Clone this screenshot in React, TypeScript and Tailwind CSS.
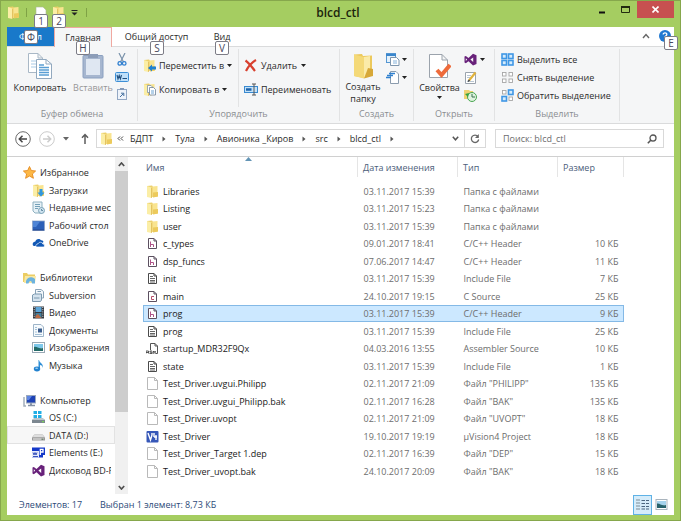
import React from 'react';

type IconName =
  | 'folder' | 'h' | 'c' | 'text' | 'asm' | 'blank' | 'uv'
  | 'star' | 'downloads' | 'recent' | 'desktop' | 'onedrive'
  | 'libraries' | 'svn' | 'video' | 'docs' | 'pictures' | 'music'
  | 'computer' | 'os' | 'drive' | 'elements' | 'vs';

interface FileRow {
  icon: IconName;
  name: string;
  date: string;
  type: string;
  size?: string;
  selected?: boolean;
}

const files: FileRow[] = [
  { icon: 'folder', name: 'Libraries', date: '03.11.2017 15:39', type: 'Папка с файлами' },
  { icon: 'folder', name: 'Listing', date: '03.11.2017 15:23', type: 'Папка с файлами' },
  { icon: 'folder', name: 'user', date: '03.11.2017 15:39', type: 'Папка с файлами' },
  { icon: 'h', name: 'c_types', date: '09.01.2017 18:41', type: 'C/C++ Header', size: '10 КБ' },
  { icon: 'h', name: 'dsp_funcs', date: '07.06.2017 14:47', type: 'C/C++ Header', size: '11 КБ' },
  { icon: 'text', name: 'init', date: '03.11.2017 15:39', type: 'Include File', size: '7 КБ' },
  { icon: 'c', name: 'main', date: '24.10.2017 19:15', type: 'C Source', size: '25 КБ' },
  { icon: 'h', name: 'prog', date: '03.11.2017 15:39', type: 'C/C++ Header', size: '9 КБ', selected: true },
  { icon: 'text', name: 'prog', date: '03.11.2017 15:39', type: 'Include File', size: '25 КБ' },
  { icon: 'asm', name: 'startup_MDR32F9Qx', date: '04.03.2016 13:55', type: 'Assembler Source', size: '10 КБ' },
  { icon: 'text', name: 'state', date: '03.11.2017 15:39', type: 'Include File', size: '1 КБ' },
  { icon: 'blank', name: 'Test_Driver.uvgui.Philipp', date: '02.11.2017 21:09', type: 'Файл "PHILIPP"', size: '135 КБ' },
  { icon: 'blank', name: 'Test_Driver.uvgui_Philipp.bak', date: '02.11.2017 16:28', type: 'Файл "BAK"', size: '135 КБ' },
  { icon: 'blank', name: 'Test_Driver.uvopt', date: '02.11.2017 21:09', type: 'Файл "UVOPT"', size: '18 КБ' },
  { icon: 'uv', name: 'Test_Driver', date: '19.10.2017 19:19', type: 'µVision4 Project', size: '18 КБ' },
  { icon: 'blank', name: 'Test_Driver_Target 1.dep', date: '02.11.2017 16:39', type: 'Файл "DEP"', size: '15 КБ' },
  { icon: 'blank', name: 'Test_Driver_uvopt.bak', date: '24.10.2017 20:09', type: 'Файл "BAK"', size: '18 КБ' },
];

interface NavItem {
  icon: IconName;
  label: string;
  root?: boolean;
  active?: boolean;
}

// null is an empty line between the sections
const navItems: (NavItem | null)[] = [
  { icon: 'star', label: 'Избранное', root: true },
  { icon: 'downloads', label: 'Загрузки' },
  { icon: 'recent', label: 'Недавние места' },
  { icon: 'desktop', label: 'Рабочий стол' },
  { icon: 'onedrive', label: 'OneDrive' },
  null,
  { icon: 'libraries', label: 'Библиотеки', root: true },
  { icon: 'svn', label: 'Subversion' },
  { icon: 'video', label: 'Видео' },
  { icon: 'docs', label: 'Документы' },
  { icon: 'pictures', label: 'Изображения' },
  { icon: 'music', label: 'Музыка' },
  null,
  { icon: 'computer', label: 'Компьютер', root: true },
  { icon: 'os', label: 'OS (C:)' },
  { icon: 'drive', label: 'DATA (D:)', active: true },
  { icon: 'elements', label: 'Elements (E:)' },
  { icon: 'vs', label: 'Дисковод BD-ROM' },
];

const crumbs = ['БДПТ', 'Тула', 'Авионика _Киров', 'src', 'blcd_ctl'];

const FolderShape = () => (
  <>
    <path d="M1 1 L6 .5 L7 1.5 V12 H1 Z" fill="#ecd06c" />
    <path d="M6.5 1.5 L11.5 1 V12 H6.5 Z" fill="#f9e48f" />
    <path d="M1 1 L5.500 2.500 V13 L1 12 Z" fill="#fbeea6" />
    <path d="M5.500 3 V13" stroke="#dcb850" strokeWidth=".7" />
    <path d="M7 7.500 L12 7 V11.500 L7 12.500 Z" fill="#ecca5c" />
  </>
);

const PageShape = ({ stroke = '#5c5060' }: { stroke?: string }) => (
  <path d="M2.500 1.500 H8 L10.500 4 V11.500 H2.500 Z M8 1.500 V4 H10.500" fill="#fff" stroke={stroke} />
);

const shapes: Record<IconName, React.ReactNode> = {
  folder: <FolderShape />,
  h: <><PageShape /><path d="M4.500 4.500 V10 M4.500 7.500 H7.500 V10" fill="none" stroke="#b0568a" /></>,
  c: <><PageShape /><path d="M8 6.500 H5.500 V9.500 H8" fill="none" stroke="#b8506c" /></>,
  text: <><PageShape stroke="#4a4a4a" /><path d="M4 4.500 H7 M4 6.500 H9 M4 8.500 H9 M4 10 H9" stroke="#666" /></>,
  asm: (
    <>
      <path d="M4.500 8 V1.500 H9 L11.500 4 V11.500 H10 M9 1.500 V4 H11.500" fill="#fff" stroke="#555" />
      <path d="M0 11.500 V9 H2.500 V11.500 M0 10.500 H2.500 M6 9 H4 V10.200 H6 V11.500 H3.500 M7.200 12 V9 L8.200 10.500 L9.200 9 V12" fill="none" stroke="#333" strokeWidth=".8" />
    </>
  ),
  blank: <path d="M1.500 .5 H8.500 L11.500 3.500 V12.500 H1.500 Z M8.500 .5 V3.500 H11.500" fill="#fff" stroke="#b9b9b9" />,
  uv: (
    <>
      <rect x=".5" y="1" width="12" height="11.500" rx="1" fill="#3657b8" />
      <path d="M2 3 L4.500 10 L6 5 V3 M8 3 V7 M8 7 H11 M10 5 V10" fill="none" stroke="#fff" strokeWidth="1.400" />
    </>
  ),
  star: <path d="M6.500 .5 L8.300 4.500 L12.600 5 L9.400 8 L10.400 12.300 L6.500 10 L2.600 12.300 L3.600 8 L.4 5 L4.700 4.500 Z" fill="#fdb845" stroke="#e58a1f" strokeWidth=".9" />,
  downloads: <><FolderShape /><path d="M7.500 5 H10.500 V8.500 H12.500 L9 12.800 L5.500 8.500 H7.500 Z" fill="#2f97dd" /></>,
  recent: (
    <>
      <path d="M1 1 H10 V12 H3 L1 10 Z" fill="#e6f1f6" stroke="#8eb0c0" />
      <path d="M3 3.500 H8 M3 5.500 H8 M3 7.500 H6" stroke="#74a0b8" />
      <circle cx="9.500" cy="9.500" r="3" fill="#cfe3ef" stroke="#7ba2b6" />
      <path d="M9.500 8 V9.500 H11" stroke="#47758d" fill="none" strokeWidth=".8" />
    </>
  ),
  desktop: <><rect x=".5" y="2" width="12" height="9.500" fill="#2c60b8" stroke="#8da5c9" strokeWidth=".8" /><path d="M1 2.500 H8 L4 8 H1 Z" fill="#4d84d6" /><path d="M1 11 H12" stroke="#24458a" /></>,
  onedrive: (
    <>
      <path d="M1 9.500 C0 6.800 2 5.600 3.200 5.800 C3.700 2.600 7.600 2 9 4.200 C10.500 4 11.400 5 11.500 6 L6 10 H2 Z" fill="#1158b5" />
      <path d="M4.500 11 C3 9.600 4.400 7.800 6 8 C6.600 5.700 10 5.700 10.600 7.800 C12.800 7.700 13 10.400 11.600 11 Z" fill="#1158b5" stroke="#fff" strokeWidth=".7" />
    </>
  ),
  libraries: (
    <>
      <path d="M0 2 H4 L5 3.500 H12 V11 H0 Z" fill="#eccd63" />
      <path d="M2 5 H13 L12 12 H1 Z" fill="#f9e8a2" />
      <path d="M3 10 C4 6 9 5 12 8 V12.500 H9 C9 9.500 6.500 9 5.500 12.500 H3 Z" fill="#6db3de" />
    </>
  ),
  svn: (
    <>
      <path d="M3.500 .5 H9 L11.500 2.500 V9 H3.500 Z" fill="#f4f8fb" stroke="#8ba4b8" />
      <path d="M.5 6 L2.500 5 H9.500 V11 L8.500 12.500 H.5 Z" fill="#d5e3ee" stroke="#7d9ab0" />
      <path d="M2 9 H7.500 M5.500 2.500 H9" stroke="#7d9ab0" />
    </>
  ),
  video: (
    <>
      <rect x="1" y=".5" width="11" height="12" fill="#34383e" />
      <path d="M3.500 1 H9.500 V6 H3.500 Z" fill="#5ca5d8" />
      <path d="M3.500 7 H9.500 V12 H3.500 Z" fill="#427e9b" />
      <path d="M3.500 10 L6 8 L9.500 12 H3.500 Z" fill="#bd6a42" />
      <path d="M2.200 1 V12 M10.800 1 V12" stroke="#d9dde0" strokeDasharray="1 1.200" />
    </>
  ),
  docs: (
    <>
      <path d="M1.500 .5 H9 L11.500 3 V12.500 H1.500 Z" fill="#f6fafd" stroke="#9db4c8" />
      <path d="M3 3.500 H5 M3 5.500 H5 M3 8 H5 M3 10.500 H10" stroke="#a4c0d6" />
      <rect x="6" y="4.500" width="4" height="4" fill="#3b5c8c" />
    </>
  ),
  pictures: (
    <>
      <rect x=".5" y="1.500" width="12" height="10" fill="#fff" stroke="#9aa9b5" />
      <path d="M2 3 H11 V7 H2 Z" fill="#7ec8ea" />
      <path d="M2 6 C5 5 6 8 11 7 V10 H2 Z" fill="#236a67" />
    </>
  ),
  music: (
    <>
      <path d="M7 1 C7.500 4 12 4.500 10.500 9 C10.500 6.600 9 6 8 6 V10 H6.500 V1 Z" fill="#2f8fd6" />
      <ellipse cx="5" cy="10" rx="3.200" ry="2.400" fill="#2382cf" />
      <ellipse cx="4.600" cy="9.300" rx="1.500" ry=".8" fill="#9dd0f3" />
    </>
  ),
  computer: (
    <>
      <rect x="3.500" y="1.500" width="9" height="7.500" fill="#1e42b5" stroke="#9aa8bd" />
      <path d="M4 2 H9 L6 6 H4 Z" fill="#5e86e3" />
      <path d="M5 11.500 H12 M7 10 H9" stroke="#8492a6" strokeWidth="1.400" />
      <path d="M1 3 V12 H3" stroke="#a3aebb" fill="none" strokeWidth="1.500" />
    </>
  ),
  os: (
    <>
      <path d="M1.500 0 H5 V3 H1.500 Z M6 0 H9.500 V3 H6 Z M1.500 4 H5 V7 H1.500 Z M6 4 H9.500 V7 H6 Z" fill="#20aee5" />
      <path d="M0 9 L2 7.500 H11 L13 9 V12 H0 Z" fill="#7c8790" />
      <path d="M2 7.500 H11 L13 9 H0 Z" fill="#bcc6cd" />
      <path d="M10 10.700 H12" stroke="#79e04e" />
    </>
  ),
  drive: (
    <>
      <path d="M2.500 5.500 H10.500 L13 8.500 V11.500 H0 V8.500 Z" fill="#9a9a9a" />
      <path d="M2.500 5.500 H10.500 L12.500 8.300 H.5 Z" fill="#dedede" />
      <path d="M1 9.200 H12 V10.800 H1 Z" fill="#ccc" />
      <path d="M9.500 10.200 H11.500" stroke="#4f6b4f" />
    </>
  ),
  elements: (
    <>
      <path d="M0 1.500 H13 V9 H11 V11.500 H0 Z" fill="#1438c9" />
      <path d="M0 5 H7 V11.500 H0 Z" fill="#e6eafa" />
      <path d="M1 6.500 L2 9 L3 6.500 L4 9 L5 6.500 M1 10.500 H6" fill="none" stroke="#2643b5" strokeWidth=".9" />
      <path d="M8.300 9 V3.300 H11 V6 H8.300" fill="none" stroke="#fff" strokeWidth="1.300" />
    </>
  ),
  vs: <path d="M9 .8 L12.500 2.200 V11 L9 12.400 L4.500 8.200 L1.800 10.300 L.5 9.600 V3.600 L1.800 3 L4.500 5 Z M9.200 4.400 L6.400 6.600 L9.200 8.900 Z M1.800 5.200 V8 L3.200 6.600 Z" fill="#68217a" fillRule="evenodd" />,
};

const Icon = ({ name }: { name: IconName }) => (
  <svg viewBox="0 0 13 13" className="size-[13px] shrink-0" aria-hidden="true">
    {shapes[name]}
  </svg>
);

const Caret = () => (
  <svg viewBox="0 0 5 3" className="h-[3px] w-[5px] shrink-0" aria-hidden="true">
    <path d="M0 0 H5 L2.500 3 Z" fill="#222" />
  </svg>
);

const KeyTip = ({ children, className }: { children: string; className: string }) => (
  <span
    className={`absolute z-10 flex h-[14px] w-[14px] items-center justify-center rounded-[2px] border border-[#7c7c86] bg-white text-[10px] leading-none text-[#47475c] ${className}`}
  >
    {children}
  </span>
);

const TitleBar = () => (
  <header className="relative flex h-[26px] shrink-0 items-center justify-center pb-[4px] pr-[5px]">
    <div className="absolute left-0 top-[5px] flex items-center">
      <Icon name="folder" />
      <span className="ml-[6px] mr-[7px] h-[9px] w-px bg-[#7fa245]" />
      <button aria-label="Свойства" className="relative flex">
        <svg viewBox="0 0 13 13" className="size-[13px]">
          <path d="M2 1 H9 L12 4 V13 H2 Z" fill="#fff" stroke="#a8b595" strokeWidth=".6" />
        </svg>
        <KeyTip className="left-0 top-[8px]">1</KeyTip>
      </button>
      <button aria-label="Новая папка" className="relative ml-[5px] flex">
        <Icon name="folder" />
        <KeyTip className="left-0 top-[8px]">2</KeyTip>
      </button>
      <button aria-label="Настройка панели" className="ml-[6px]">
        <svg viewBox="0 0 7 6" className="h-[6px] w-[7px]">
          <path d="M.5 .5 H6.500" stroke="#222" />
          <path d="M.5 2.500 H6.500 L3.500 5.500 Z" fill="#222" />
        </svg>
      </button>
      <span className="ml-[8px] h-[9px] w-px bg-[#7fa245]" />
    </div>
    <h1 className="text-[12px] font-semibold text-[#1c240c]">blcd_ctl</h1>
    <div className="absolute right-0 top-0 flex h-[17px]">
      <button aria-label="Свернуть" className="flex w-[22px] items-center justify-center">
        <svg viewBox="0 0 8 8" className="size-[8px]"><path d="M1 6.500 H7" stroke="#111" strokeWidth="2" /></svg>
      </button>
      <button aria-label="Развернуть" className="flex w-[24px] items-center justify-center">
        <svg viewBox="0 0 9 7" className="h-[7px] w-[9px]"><path d="M.5 1 H8.500 V6.500 H.5 Z" fill="none" stroke="#222b10" /><path d="M0 1 H9" stroke="#222b10" strokeWidth="2" /></svg>
      </button>
      <button aria-label="Закрыть" className="flex w-[37px] items-center justify-center bg-[#c75050]">
        <svg viewBox="0 0 7 7" className="size-[7px]"><path d="M.5 .5 L6.500 6.500 M6.500 .5 L.5 6.500" stroke="#fff" strokeWidth="1.600" /></svg>
      </button>
    </div>
  </header>
);

const Tabs = () => (
  <nav className="flex h-[20px] shrink-0 border-b border-[#dadbdc] bg-white">
    <button className="relative h-[19px] w-[47px] bg-[#1979ca] text-white">
      Файл
      <KeyTip className="left-[17px] top-[3px]">Ф</KeyTip>
    </button>
    <button className="relative -mb-px w-[58px] border border-b-0 border-[#f0a8a0] bg-[#f5f6f7]">
      Главная
      <KeyTip className="left-[21px] top-[13px]">H</KeyTip>
    </button>
    <button className="relative w-[89px]">
      Общий доступ
      <KeyTip className="left-[38px] top-[14px]">S</KeyTip>
    </button>
    <button className="relative w-[42px]">
      Вид
      <KeyTip className="left-[14px] top-[14px]">V</KeyTip>
    </button>
    <div className="relative ml-auto flex items-center gap-[9px] pb-[2px] pr-[3px]">
      <button aria-label="Свернуть ленту">
        <svg viewBox="0 0 8 6" className="h-[6px] w-[8px]"><path d="M1 5 L4 1.500 L7 5" fill="none" stroke="#666" strokeWidth="1.400" /></svg>
      </button>
      <button aria-label="Справка">
        <svg viewBox="0 0 12 12" className="size-[12px]">
          <circle cx="6" cy="6" r="6" fill="#1f78d1" />
          <path d="M4.200 4.600 C4.200 2.200 8 2.400 7.800 4.600 C7.700 5.800 6 5.800 6 7.400 M6 8.600 V10" fill="none" stroke="#fff" strokeWidth="1.300" />
        </svg>
      </button>
      <KeyTip className="-right-[4px] top-[9px]">E</KeyTip>
    </div>
  </nav>
);

const RibbonGroup = ({ title, className, children }: { title: string; className: string; children: React.ReactNode }) => (
  <section className={`flex shrink-0 flex-col border-r border-[#e2e3e4] ${className}`}>
    <div className="flex flex-1">{children}</div>
    <h2 className="text-center leading-[14px] text-[#8a8d91]">{title}</h2>
  </section>
);

const SelectIcon = ({ on }: { on: boolean[] }) => (
  <svg viewBox="0 0 13 13" className="size-[13px] shrink-0" aria-hidden="true">
    {on.map((active, i) => (
      <rect
        key={i}
        x={(i % 2) * 6.5 + (active ? 1 : 1.5)}
        y={Math.floor(i / 2) * 6.5 + (active ? 1 : 1.5)}
        width={active ? 4.5 : 3.5}
        height={active ? 4.5 : 3.5}
        fill={active ? '#d5ebfb' : '#fff'}
        stroke={active ? '#3f97e5' : '#a6a6a6'}
        strokeWidth={active ? 1.6 : 0.9}
      />
    ))}
  </svg>
);

const Ribbon = () => (
  <div className="flex h-[77px] shrink-0 overflow-hidden border-b border-[#dadbdc] bg-[#f5f6f7] py-[2px]">
    <RibbonGroup title="Буфер обмена" className="w-[131px]">
      <button className="flex w-[66px] flex-col items-center gap-[2px] pt-[4px]">
        <svg viewBox="0 0 24 26" className="h-[26px] w-[24px]">
          <path d="M.5 .5 H10 L14.500 5 V19.500 H.5 Z M10 .5 V5 H14.500" fill="#fff" stroke="#a9b8c6" />
          <path d="M3 8 H8 M3 11 H8 M3 14 H8" stroke="#a9cbe6" />
          <path d="M8.500 6.500 H18 L23.500 11 V25.500 H8.500 Z" fill="#fff" stroke="#92a9bf" />
          <path d="M18 6.500 V11 H23.500" fill="none" stroke="#92a9bf" />
          <path d="M11 12 H16 M11 14.500 H21 M11 17 H21 M11 19.500 H21 M11 22 H21" stroke="#5a9ed4" strokeWidth="1.400" />
        </svg>
        Копировать
      </button>
      <button className="flex w-[40px] flex-col items-center gap-[2px] pt-[4px] text-[#979797]">
        <svg viewBox="0 0 22 26" className="h-[26px] w-[22px]">
          <rect x="1" y="2.500" width="20" height="22.500" rx="1" fill="#a6b6cf" stroke="#8ba0c0" />
          <path d="M4 6 H18 V22 H4 Z" fill="#dfe7f2" />
          <path d="M6 1 H16 V5 H6 Z" fill="#8c9db8" />
        </svg>
        Вставить
      </button>
      <div className="flex flex-col items-center gap-[6px] pl-[2px] pt-[4px]">
        <button aria-label="Вырезать">
          <svg viewBox="0 0 10 13" className="h-[13px] w-[10px]">
            <path d="M2 0 L6.500 9 M8 0 L3.500 9" stroke="#7a92aa" strokeWidth="1.200" />
            <circle cx="2.800" cy="10.400" r="1.800" fill="none" stroke="#2f7fd0" strokeWidth="1.300" />
            <circle cx="7.200" cy="10.400" r="1.800" fill="none" stroke="#2f7fd0" strokeWidth="1.300" />
          </svg>
        </button>
        <button aria-label="Скопировать путь">
          <svg viewBox="0 0 14 10" className="h-[10px] w-[14px]">
            <rect x=".5" y=".5" width="13" height="9" rx="1" fill="#bfe0fa" stroke="#3d8fd6" />
            <path d="M2 3 L3 7 L4.200 3.500 L5.400 7 L6.500 3 M7.500 6.500 H12" fill="none" stroke="#23507e" strokeWidth="1.100" />
          </svg>
        </button>
        <button aria-label="Вставить ярлык">
          <svg viewBox="0 0 10 12" className="h-[12px] w-[10px]">
            <rect x=".5" y="1.500" width="9" height="10" fill="#eef3fa" stroke="#93a8c4" />
            <path d="M3 0 H7 V2 H3 Z" fill="#8399b8" />
            <path d="M3 9 L6.500 5.500 M4 5.200 H6.800 V8" fill="none" stroke="#45709f" />
          </svg>
        </button>
      </div>
    </RibbonGroup>
    <RibbonGroup title="Упорядочить" className="w-[202px]">
      <div className="flex w-[101px] flex-col items-start gap-[11px] border-r border-[#e2e3e4] pl-[5px] pt-[10px]">
        <button className="flex items-center gap-[3px]">
          <svg viewBox="0 0 13 13" className="size-[13px]"><FolderShape /><path d="M5 9 L9 5.500 V7.500 H13 V10.500 H9 V12.500 Z" fill="#1f82d2" /></svg>
          Переместить в <Caret />
        </button>
        <button className="flex items-center gap-[3px]">
          <svg viewBox="0 0 13 13" className="size-[13px]"><FolderShape /><path d="M4.500 2.500 H8 L9.500 4 V9.500 H4.500 Z" fill="#fff" stroke="#7f93a7" strokeWidth=".8" /><path d="M6.500 4.500 H10.500 L12.500 6.500 V12 H6.500 Z" fill="#fff" stroke="#6d8297" strokeWidth=".8" /><path d="M8 8 H11 M8 10 H11" stroke="#6aa3d3" /></svg>
          Копировать в <Caret />
        </button>
      </div>
      <div className="flex flex-col items-start gap-[11px] pl-[5px] pt-[10px]">
        <button className="flex items-center gap-[4px]">
          <svg viewBox="0 0 13 13" className="size-[13px]"><path d="M1.500 1.500 C5 4 8 8 11 12 M12 1 C7 4 4 8 2 12" fill="none" stroke="#d8402f" strokeWidth="2.200" /></svg>
          Удалить <Caret />
        </button>
        <button className="flex items-center gap-[3px]">
          <svg viewBox="0 0 14 13" className="h-[13px] w-[14px]"><rect x=".5" y="3.500" width="13" height="6" fill="#c4e2f8" stroke="#3a8ad0" /><path d="M2 6.500 H7.500" stroke="#1d63ac" strokeWidth="2.500" /><path d="M8 1 H12 M10 1 V12 M8 12 H12" stroke="#555" /></svg>
          Переименовать
        </button>
      </div>
    </RibbonGroup>
    <RibbonGroup title="Создать" className="w-[74px]">
      <button className="flex w-[46px] flex-col items-center gap-[2px] pt-[4px] leading-[12px]">
        <svg viewBox="0 0 22 26" className="h-[26px] w-[22px]">
          <path d="M2 1.500 L10 1 L11 3 L20 2.500 V22 L12 25 L2 23 Z" fill="#ecc95c" />
          <path d="M12 4 L18 3 V21 L12 25 Z" fill="#fbeba9" />
          <path d="M2 1.500 L12 4 V25.500 L2 23 Z" fill="#f4d978" />
          <path d="M16 15 L21 16 V23 L12 25.500 Z" fill="#d7a838" />
        </svg>
        <span>Создать<br />папку</span>
      </button>
      <div className="flex flex-col items-start gap-[5px] pt-[4px]">
        <button aria-label="Создать элемент" className="flex items-center gap-[2px]">
          <svg viewBox="0 0 14 13" className="h-[13px] w-[14px]"><rect x=".5" y=".5" width="9" height="9" fill="#e4f1fb" stroke="#5496d2" /><path d="M0 2 H10" stroke="#3a86cc" strokeWidth="2" /><path d="M4.500 4.500 H10.500 L13 7 V12.500 H4.500 Z" fill="#fff" stroke="#7d95ad" /><path d="M7 8 H11 M7 10 H11" stroke="#86b3db" /></svg>
          <Caret />
        </button>
        <button aria-label="Простой доступ" className="flex items-center gap-[2px]">
          <svg viewBox="0 0 14 13" className="h-[13px] w-[14px]"><path d="M4.500 .5 H10 L12.500 3 V12.500 H4.500 Z" fill="#fff" stroke="#8b9cae" /><path d="M3 2.500 H9 M1 4.500 H7 M0 6.500 H5" stroke="#2f80cf" strokeWidth="1.300" /></svg>
          <Caret />
        </button>
      </div>
    </RibbonGroup>
    <RibbonGroup title="Открыть" className="w-[81px]">
      <button className="flex w-[50px] flex-col items-center gap-[2px] pl-[1px] pt-[4px]">
        <svg viewBox="0 0 22 26" className="h-[26px] w-[22px]">
          <path d="M.5 1.500 H13 L18.500 7 V24.500 H.5 Z M13 1.500 V7 H18.500" fill="#fff" stroke="#9ba3ac" />
          <path d="M8 17 L12.500 22 L21 12" fill="none" stroke="#ee6b3b" strokeWidth="4" />
        </svg>
        Свойства
        <Caret />
      </button>
      <div className="flex flex-col items-start gap-[5px] pt-[4px]">
        <button aria-label="Открыть" className="flex items-center gap-[3px]"><Icon name="vs" /><Caret /></button>
        <button aria-label="Изменить">
          <svg viewBox="0 0 13 13" className="size-[13px]"><path d="M1.500 1.500 H11.500 V12.500 H1.500 Z" fill="#fff" stroke="#9aa3ad" /><path d="M3 4.500 H7 M3 6.500 H6 M3 10.500 H10" stroke="#b9c6d2" /><path d="M5 9.500 L11.500 1.500" stroke="#e0b23d" strokeWidth="2.200" /><path d="M4 10.500 L5.500 9" stroke="#444" strokeWidth="1.500" /></svg>
        </button>
        <button aria-label="Журнал">
          <svg viewBox="0 0 13 13" className="size-[13px]"><path d="M0 1 H5 L6 2 H9 V10 H0 Z" fill="#efd272" /><circle cx="8" cy="8" r="4.500" fill="#dff3df" stroke="#4aa652" /><path d="M8 5 V8 H11" fill="none" stroke="#3b7050" /><path d="M1 5 L5 4 L4 8 Z" fill="#36a23e" /></svg>
        </button>
      </div>
    </RibbonGroup>
    <RibbonGroup title="Выделить" className="w-[125px]">
      <div className="flex flex-col items-start gap-[5px] pl-[6px] pt-[4px]">
        <button className="flex items-center gap-[3px]"><SelectIcon on={[true, true, true, true]} />Выделить все</button>
        <button className="flex items-center gap-[3px]"><SelectIcon on={[false, false, false, false]} />Снять выделение</button>
        <button className="flex items-center gap-[3px]"><SelectIcon on={[false, true, true, false]} />Обратить выделение</button>
      </div>
    </RibbonGroup>
  </div>
);

const AddressBar = () => (
  <div className="flex h-[33px] shrink-0 items-center border-b border-[#d0d0d0] pb-[3px] pl-[8px] pr-[10px]">
    <button aria-label="Назад" className="mr-[8px]">
      <svg viewBox="0 0 16 16" className="size-[16px]"><circle cx="8" cy="8" r="7.300" fill="#fff" stroke="#6b6b6b" /><path d="M12 8 H4.500 M7.500 4.800 L4.300 8 L7.500 11.200" fill="none" stroke="#444" strokeWidth="1.500" /></svg>
    </button>
    <button aria-label="Вперед" className="mr-[8px]">
      <svg viewBox="0 0 16 16" className="size-[16px]"><circle cx="8" cy="8" r="7.300" fill="#fff" stroke="#cbcbcb" /><path d="M4 8 H11.500 M8.500 4.800 L11.700 8 L8.500 11.200" fill="none" stroke="#cbcbcb" strokeWidth="1.500" /></svg>
    </button>
    <button aria-label="Последние" className="mr-[12px]">
      <svg viewBox="0 0 6 4" className="h-[4px] w-[6px]"><path d="M0 0 H6 L3 3.500 Z" fill="#666" /></svg>
    </button>
    <button aria-label="Вверх" className="mr-[7px]">
      <svg viewBox="0 0 8 11" className="h-[11px] w-[8px]"><path d="M4 11 V1.500 M1 4.800 L4 1.500 L7 4.800" fill="none" stroke="#5c5c5c" strokeWidth="1.500" /></svg>
    </button>
    <div className="flex h-[19px] flex-1 items-center border border-[#d9d9d9] pl-[3px]">
      <Icon name="folder" />
      <svg viewBox="0 0 7 5" className="ml-[4px] mr-[5px] h-[5px] w-[7px]" aria-hidden="true"><path d="M3 .5 L1 2.500 L3 4.500 M6 .5 L4 2.500 L6 4.500" fill="none" stroke="#444" /></svg>
      {crumbs.map(crumb => (
        <React.Fragment key={crumb}>
          <button className="whitespace-nowrap px-[1px]">{crumb}</button>
          <svg viewBox="0 0 4 6" className="mx-[8px] h-[6px] w-[4px] shrink-0" aria-hidden="true"><path d="M.5 .5 L3.500 3 L.5 5.500 Z" fill="#555" /></svg>
        </React.Fragment>
      ))}
      <button aria-label="Предыдущие расположения" className="ml-auto px-[5px]">
        <svg viewBox="0 0 7 5" className="h-[5px] w-[7px]"><path d="M.8 .8 L3.500 3.800 L6.200 .8" fill="none" stroke="#555" strokeWidth="1.500" /></svg>
      </button>
      <button aria-label="Обновить" className="flex h-full w-[21px] items-center justify-center border-l border-[#d9d9d9]">
        <svg viewBox="0 0 10 10" className="size-[10px]"><path d="M8 2.500 A3.700 3.700 0 1 0 8.700 5.500" fill="none" stroke="#666" strokeWidth="1.300" /><path d="M8.800 0 V4 H5 Z" fill="#666" /></svg>
      </button>
    </div>
    <div className="ml-[9px] flex h-[19px] w-[169px] items-center border border-[#d9d9d9] pl-[7px] pr-[6px]">
      <input aria-label="Поиск" placeholder="Поиск: blcd_ctl" className="min-w-0 flex-1 bg-transparent outline-none placeholder:text-[#6d6d6d]" />
      <svg viewBox="0 0 10 10" className="size-[10px]" aria-hidden="true"><circle cx="6" cy="4" r="3" fill="none" stroke="#555" strokeWidth="1.300" /><path d="M4 6 L.8 9.200" stroke="#555" strokeWidth="1.600" /></svg>
    </div>
  </div>
);

const NavPane = () => (
  <aside className="flex w-[121px] shrink-0">
    <ul className="min-w-0 flex-1 pt-[7px]">
      {navItems.map((item, i) => (
        <li key={i} className="odd:h-[17px] even:h-[18px]">
          {item && (
            <a
              href="#"
              className={`flex h-full items-center gap-[4px] border pr-[3px] ${item.root ? 'pl-[15px]' : 'pl-[24px]'} ${item.active ? 'border-[#e2e2e2] bg-[#f7f7f7]' : 'border-transparent'}`}
            >
              <Icon name={item.icon} />
              <span className="min-w-0 overflow-hidden whitespace-nowrap">{item.label}</span>
            </a>
          )}
        </li>
      ))}
    </ul>
    <div className="flex w-[13px] flex-col bg-[#f0f0f0]">
      <button aria-label="Прокрутить вверх" className="flex h-[14px] items-center justify-center">
        <svg viewBox="0 0 7 5" className="h-[5px] w-[7px]"><path d="M.8 4 L3.500 1 L6.200 4" fill="none" stroke="#505050" strokeWidth="1.700" /></svg>
      </button>
      <div className="flex-1"><div className="h-[78%] bg-[#cdcdcd]" /></div>
      <button aria-label="Прокрутить вниз" className="flex h-[14px] items-center justify-center">
        <svg viewBox="0 0 7 5" className="h-[5px] w-[7px]"><path d="M.8 1 L3.500 4 L6.200 1" fill="none" stroke="#505050" strokeWidth="1.700" /></svg>
      </button>
    </div>
  </aside>
);

const FileTable = () => (
  <main className="relative min-w-0 flex-1 pl-[15px] pr-[50px]">
    <svg viewBox="0 0 7 4" className="absolute left-[117px] top-0 h-[4px] w-[7px]" aria-hidden="true"><path d="M0 4 L3.500 0 L7 4 Z" fill="#6394b5" /></svg>
    <table className="w-full table-fixed border-collapse text-left">
      <thead>
        <tr className="h-[20px] text-[#4c607a]">
          <th className="border-r border-[#e5e5e5] pl-[3px] font-normal">Имя</th>
          <th className="w-[100px] border-r border-[#e5e5e5] pl-[5px] font-normal">Дата изменения</th>
          <th className="w-[100px] border-r border-[#e5e5e5] pl-[5px] font-normal">Тип</th>
          <th className="w-[66px] border-r border-[#e5e5e5] pl-[5px] font-normal">Размер</th>
        </tr>
        <tr className="h-[5px]" />
      </thead>
      <tbody className="text-[#6d6d6d]">
        {files.map((file, i) => (
          <tr
            key={i}
            className={`odd:h-[18px] even:h-[17px] ${file.selected ? 'bg-[#cce8ff] outline outline-1 -outline-offset-1 outline-[#84b9e6]' : ''}`}
          >
            <td className="p-0">
              <span className="flex items-center gap-[4px] whitespace-nowrap pl-[3px] text-[#1a1a1a]">
                <Icon name={file.icon} />
                {file.name}
              </span>
            </td>
            <td className="whitespace-nowrap p-0 pl-[6px]">{file.date}</td>
            <td className="whitespace-nowrap p-0 pl-[6px]">{file.type}</td>
            <td className="whitespace-nowrap p-0 pr-[5px] text-right">{file.size}</td>
          </tr>
        ))}
      </tbody>
    </table>
  </main>
);

const StatusBar = () => (
  <footer className="flex h-[21px] shrink-0 items-center gap-[18px] pl-[12px] pr-[6px] text-[#2c4a78]">
    <span>Элементов: 17</span>
    <span>Выбран 1 элемент: 8,73 КБ</span>
    <div className="ml-auto flex items-center gap-[3px]">
      <button aria-label="Таблица" className="flex h-[20px] w-[19px] items-center justify-center border border-[#5fb2e6] bg-[#d5ecfa]">
        <svg viewBox="0 0 13 11" className="h-[11px] w-[13px]"><path d="M0 1 H4 M0 4 H4 M0 7 H4 M0 10 H4" stroke="#9bacb8" strokeWidth="1.500" /><path d="M5.500 1.500 H9 M5.500 4.500 H9 M5.500 7.500 H9 M5.500 10 H9 M10 1.500 H13 M10 4.500 H13 M10 7.500 H13 M10 10 H13" stroke="#4b6680" /></svg>
      </button>
      <button aria-label="Крупные значки">
        <svg viewBox="0 0 13 11" className="h-[11px] w-[13px]"><rect x="1" y=".5" width="11" height="10" fill="#fff" stroke="#a9b4bd" /><path d="M2 2 H11 V6 H2 Z" fill="#a6d3ec" /><path d="M2 4.500 C5 4 6 7 11 6 V9 H2 Z" fill="#27626b" /></svg>
      </button>
    </div>
  </footer>
);

export default function App() {
  return (
    <div className="flex min-h-screen flex-col border border-[#86a74c] bg-[#a5cd61] px-[6px] pb-[5px] font-['Open_Sans','Noto_Sans',sans-serif] text-[9px] leading-[13px] text-[#2b2b2b]">
      <TitleBar />
      <div className="flex flex-1 flex-col bg-white">
        <Tabs />
        <Ribbon />
        <AddressBar />
        <div className="flex flex-1">
          <NavPane />
          <FileTable />
        </div>
        <StatusBar />
      </div>
    </div>
  );
}
